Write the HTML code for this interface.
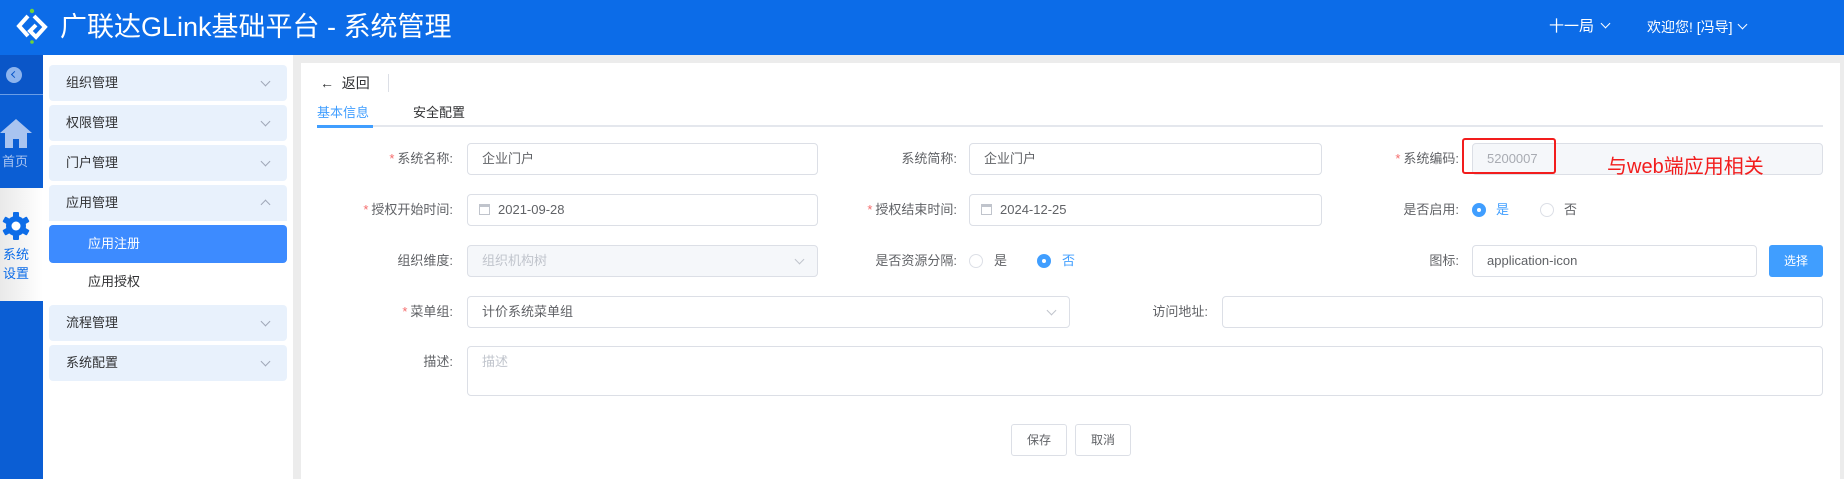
<!DOCTYPE html>
<html><head><meta charset="utf-8">
<style>
*{box-sizing:border-box;margin:0;padding:0}
body{width:1844px;height:479px;overflow:hidden;background:#ececec;font-family:"Liberation Sans","Noto Sans CJK SC",sans-serif;font-size:13px;color:#606266;position:relative}
.abs{position:absolute}
.hdr{left:0;top:0;width:1844px;height:55px;background:#0c6ce8;color:#fff}
.strip{left:0;top:55px;width:43px;height:424px;background:#0b5ed4}
.sub{left:43px;top:55px;width:250px;height:424px;background:#fff}
.item{position:absolute;left:6px;width:238px;height:36px;background:#e8f1fc;border-radius:4px;color:#303133;font-size:13px;line-height:36px;padding-left:17px}
.item .ch{position:absolute;right:18px;top:13px;width:7px;height:7px;border-right:1px solid #a0a8b8;border-bottom:1px solid #a0a8b8;transform:rotate(45deg)}
.card{left:301px;top:63px;width:1539px;height:416px;background:#fff}
.lbl{position:absolute;text-align:right;width:160px;line-height:32px;color:#606266}
.req{color:#f56c6c;margin-right:3px}
.inp{position:absolute;height:32px;border:1px solid #dcdfe6;border-radius:4px;background:#fff;line-height:30px;padding-left:14px;color:#606266}
.dis{background:#f5f7fa;color:#c0c4cc}
.chv{position:absolute;right:14px;top:10px;width:7px;height:7px;border-right:1px solid #c0c4cc;border-bottom:1px solid #c0c4cc;transform:rotate(45deg)}
.radio{position:absolute;width:14px;height:14px;border-radius:50%;border:1px solid #dcdfe6;background:#fff}
.radio.on{background:#409eff;border-color:#409eff}
.radio.on:after{content:"";position:absolute;left:4px;top:4px;width:4px;height:4px;border-radius:50%;background:#fff}
.rt{position:absolute;line-height:14px}
.cal{display:inline-block;width:11px;height:11px;border:1px solid #c0c4cc;border-top-width:3px;vertical-align:-1px;margin-right:8px}
.btn{position:absolute;height:32px;border:1px solid #dcdfe6;border-radius:3px;background:#fff;text-align:center;line-height:30px;font-size:12px;color:#606266}
</style></head><body>
<div class="abs hdr">
  <svg class="abs" style="left:14px;top:6px" width="40" height="40" viewBox="0 0 40 40">
    <circle cx="18" cy="5" r="2.2" fill="#6fd23a"/><circle cx="18" cy="36" r="1.8" fill="#6fd23a"/>
    <path d="M14 10 L5 20 L14 30" fill="none" stroke="#fff" stroke-width="4"/>
    <path d="M20 10 L31 21 L22 31 L16 25 L22 19" fill="none" stroke="#fff" stroke-width="4"/>
  </svg>
  <div class="abs" style="left:60px;top:10px;font-size:27px;line-height:34px">广联达GLink基础平台 - 系统管理</div>
  <div class="abs" style="left:1549px;top:17px;font-size:15px;line-height:20px">十一局 <span style="display:inline-block;width:7px;height:7px;border-right:1.5px solid #fff;border-bottom:1.5px solid #fff;transform:rotate(45deg);margin-left:4px;vertical-align:4px"></span></div>
  <div class="abs" style="left:1647px;top:17px;font-size:14px;line-height:20px">欢迎您! [冯导] <span style="display:inline-block;width:7px;height:7px;border-right:1.5px solid #fff;border-bottom:1.5px solid #fff;transform:rotate(45deg);margin-left:3px;vertical-align:4px"></span></div>
</div>
<div class="abs strip"></div>
<div class="abs" style="left:0;top:55px;width:43px;height:40px;background:#0a56c8;border-bottom:1px solid #6a9de6"></div>
<div class="abs" style="left:6px;top:67px;width:16px;height:16px;border-radius:50%;background:#8db4ee"></div>
<div class="abs" style="left:12px;top:72px;width:5px;height:5px;border-left:1.5px solid #0a56c8;border-bottom:1.5px solid #0a56c8;transform:rotate(45deg)"></div>
<svg class="abs" style="left:0;top:118px" width="32" height="30" viewBox="0 0 32 30"><path d="M16 1 L32 15 L27 15 L27 30 L19 30 L19 21 L13 21 L13 30 L5 30 L5 15 L0 15 Z" fill="#a9c4f0"/></svg>
<div class="abs" style="left:2px;top:151px;color:#a9c4f0;font-size:13px">首页</div>
<div class="abs" style="left:0;top:188px;width:43px;height:113px;background:linear-gradient(90deg,#e9e9e9,#fff)"></div>
<svg class="abs" style="left:2px;top:212px" width="28" height="28" viewBox="0 0 28 28"><g fill="#0c6ce8"><circle cx="14" cy="14" r="10"/><rect x="11" y="0" width="6" height="28" rx="1"/><rect x="11" y="0" width="6" height="28" rx="1" transform="rotate(60 14 14)"/><rect x="11" y="0" width="6" height="28" rx="1" transform="rotate(120 14 14)"/></g><circle cx="14" cy="14" r="4.5" fill="#fff"/></svg>
<div class="abs" style="left:3px;top:245px;color:#0c6ce8;font-size:13px;line-height:19px">系统<br>设置</div>

<div class="abs sub">
  <div class="item" style="top:10px">组织管理<span class="ch"></span></div>
  <div class="item" style="top:50px">权限管理<span class="ch"></span></div>
  <div class="item" style="top:90px">门户管理<span class="ch"></span></div>
  <div class="item" style="top:130px;border-radius:4px 4px 0 0">应用管理<span class="ch" style="transform:rotate(225deg);top:16px"></span></div>
  <div class="item" style="top:170px;height:38px;background:#3d8bff;color:#fff;padding-left:39px;line-height:38px">应用注册</div>
  <div class="abs" style="left:45px;top:218px;color:#303133;line-height:18px">应用授权</div>
  <div class="item" style="top:250px">流程管理<span class="ch"></span></div>
  <div class="item" style="top:290px">系统配置<span class="ch"></span></div>
</div>

<div class="abs card">
  <div class="abs" style="left:19px;top:12px;color:#303133;font-size:14px;line-height:16px">&#8592;&nbsp; 返回</div>
  <div class="abs" style="left:87px;top:11px;width:1px;height:18px;background:#dcdfe6"></div>
  <div class="abs" style="left:16px;top:42px;color:#409eff;font-size:13px;line-height:16px">基本信息</div>
  <div class="abs" style="left:112px;top:42px;color:#303133;font-size:13px;line-height:16px">安全配置</div>
  <div class="abs" style="left:16px;top:62px;width:1506px;height:2px;background:#e4e7ed"></div>
  <div class="abs" style="left:16px;top:62px;width:56px;height:3px;background:#409eff"></div>
</div>

<!-- row1 -->
<div class="lbl" style="left:293px;top:143px"><span class="req">*</span>系统名称:</div>
<div class="inp" style="left:467px;top:143px;width:351px">企业门户</div>
<div class="lbl" style="left:797px;top:143px">系统简称:</div>
<div class="inp" style="left:969px;top:143px;width:353px">企业门户</div>
<div class="lbl" style="left:1299px;top:143px"><span class="req">*</span>系统编码:</div>
<div class="inp dis" style="left:1472px;top:143px;width:351px;color:#a8abb2">5200007</div>
<div class="abs" style="left:1462px;top:138px;width:94px;height:36px;border:2.5px solid #f21d1d;border-radius:3px"></div>
<div class="abs" style="left:1607px;top:155px;color:#f21d1d;font-size:20px;line-height:24px">与web端应用相关</div>
<!-- row2 -->
<div class="lbl" style="left:293px;top:194px"><span class="req">*</span>授权开始时间:</div>
<div class="inp" style="left:467px;top:194px;width:351px;padding-left:11px"><span class="cal"></span>2021-09-28</div>
<div class="lbl" style="left:797px;top:194px"><span class="req">*</span>授权结束时间:</div>
<div class="inp" style="left:969px;top:194px;width:353px;padding-left:11px"><span class="cal"></span>2024-12-25</div>
<div class="lbl" style="left:1299px;top:194px">是否启用:</div>
<div class="radio on" style="left:1472px;top:203px"></div><div class="rt" style="left:1496px;top:203px;color:#409eff">是</div>
<div class="radio" style="left:1540px;top:203px"></div><div class="rt" style="left:1564px;top:203px">否</div>
<!-- row3 -->
<div class="lbl" style="left:293px;top:245px">组织维度:</div>
<div class="inp dis" style="left:467px;top:245px;width:351px">组织机构树<span class="chv"></span></div>
<div class="lbl" style="left:797px;top:245px">是否资源分隔:</div>
<div class="radio" style="left:969px;top:254px"></div><div class="rt" style="left:994px;top:254px">是</div>
<div class="radio on" style="left:1037px;top:254px"></div><div class="rt" style="left:1062px;top:254px;color:#409eff">否</div>
<div class="lbl" style="left:1299px;top:245px">图标:</div>
<div class="inp" style="left:1472px;top:245px;width:285px">application-icon</div>
<div class="abs" style="left:1769px;top:245px;width:54px;height:32px;background:#409eff;border-radius:3px;color:#fff;text-align:center;line-height:32px;font-size:12px">选择</div>
<!-- row4 -->
<div class="lbl" style="left:293px;top:296px"><span class="req">*</span>菜单组:</div>
<div class="inp" style="left:467px;top:296px;width:603px">计价系统菜单组<span class="chv"></span></div>
<div class="lbl" style="left:1048px;top:296px">访问地址:</div>
<div class="inp" style="left:1222px;top:296px;width:601px"></div>
<!-- row5 -->
<div class="lbl" style="left:293px;top:346px">描述:</div>
<div class="inp" style="left:467px;top:346px;width:1356px;height:50px;color:#c0c4cc">描述</div>
<!-- buttons -->
<div class="btn" style="left:1011px;top:424px;width:56px">保存</div>
<div class="btn" style="left:1075px;top:424px;width:56px">取消</div>
</body></html>
